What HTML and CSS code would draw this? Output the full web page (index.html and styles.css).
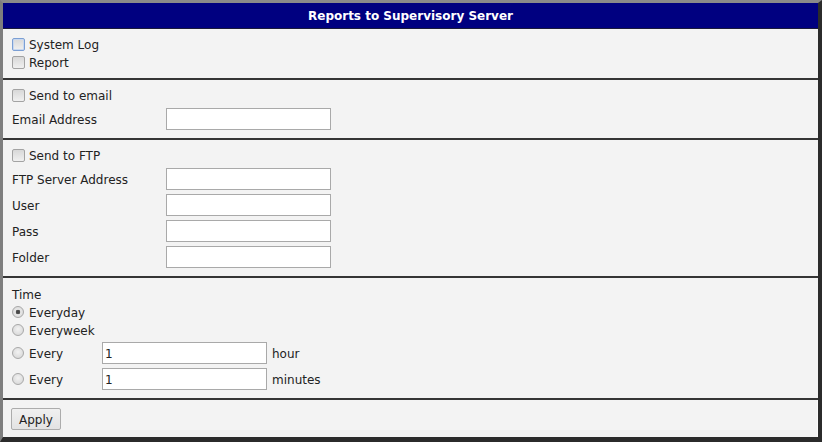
FILE: index.html
```html
<!DOCTYPE html>
<html>
<head>
<meta charset="utf-8">
<link rel="stylesheet" href="styles.css">
</head>
<body>
<div class="frame">
  <div class="title">Reports to Supervisory Server</div>
  <div class="sec sec1">
    <label class="row"><input type="checkbox" class="cb focus"><span class="t">System Log</span></label>
    <label class="row"><input type="checkbox" class="cb"><span class="t">Report</span></label>
  </div>
  <div class="sec">
    <label class="row first"><input type="checkbox" class="cb"><span class="t">Send to email</span></label>
    <div class="frow"><span class="lbl t">Email Address</span><input type="text" class="txt"></div>
  </div>
  <div class="sec">
    <label class="row first"><input type="checkbox" class="cb"><span class="t">Send to FTP</span></label>
    <div class="frow"><span class="lbl t">FTP Server Address</span><input type="text" class="txt"></div>
    <div class="frow"><span class="lbl t">User</span><input type="text" class="txt"></div>
    <div class="frow"><span class="lbl t">Pass</span><input type="text" class="txt"></div>
    <div class="frow"><span class="lbl t">Folder</span><input type="text" class="txt"></div>
  </div>
  <div class="sec">
    <div class="row time"><span class="t">Time</span></div>
    <label class="row"><input type="radio" name="t" class="rb" checked><span class="t">Everyday</span></label>
    <label class="row second"><input type="radio" name="t" class="rb"><span class="t">Everyweek</span></label>
    <div class="frow"><label class="rlbl"><input type="radio" name="t" class="rb"><span class="t">Every</span></label><input type="text" class="txt" value="1"><span class="unit t">hour</span></div>
    <div class="frow"><label class="rlbl"><input type="radio" name="t" class="rb"><span class="t">Every</span></label><input type="text" class="txt" value="1"><span class="unit t">minutes</span></div>
  </div>
  <div class="sec last">
    <button class="btn">Apply</button>
  </div>
</div>
</body>
</html>
```

FILE: styles.css
```css
html, body {
  margin: 0;
  padding: 0;
  background: #f3f3f3;
}
.frame {
  box-sizing: border-box;
  width: 822px;
  height: 442px;
  border-style: solid;
  border-width: 3px 4px 5px 3px;
  border-color: #8a8a8a #2b2b2b #2b2b2b #7e7e7e;
  background: #f3f3f3;
  display: flex;
  flex-direction: column;
  font-family: "DejaVu Sans", Verdana, sans-serif;
  font-size: 12px;
  color: #222;
}
.title {
  height: 25px;
  border-bottom: 1px solid #1a1a3a;
  background: #000080;
  color: #fff;
  font-weight: bold;
  display: flex;
  align-items: center;
  justify-content: center;
  padding-top: 1px;
  box-sizing: border-box;
  height: 26px;
}
.sec {
  padding: 6px 0 6px 9px;
  border-bottom: 2px solid #353535;
  display: flex;
  flex-direction: column;
}
.sec1 {
  padding-bottom: 7px;
}
.sec.last {
  border-bottom: none;
  padding-top: 8px;
  flex: 1;
  border-right: 1px solid #fbfbfb;
}
.t {
  padding-top: 2px;
}
.row {
  height: 18px;
  display: flex;
  align-items: center;
}
.row.first {
  margin-bottom: 2px;
}
.row.second {
  margin-bottom: 1px;
}
.row.time {
  height: 19px;
}
.frow {
  height: 26px;
  display: flex;
  align-items: center;
}
.lbl {
  width: 154px;
}
.cb {
  appearance: none;
  -webkit-appearance: none;
  width: 13px;
  height: 13px;
  margin: 0 4px 0 0;
  box-sizing: border-box;
  border: 1px solid #a3a3a3;
  border-radius: 2px;
  background: linear-gradient(#d8d8d8, #f0f0f0);
}
.cb.focus {
  border-color: #7b9fd4;
  box-shadow: inset 0 0 0 1px #c9d8ef;
}
.rb {
  appearance: none;
  -webkit-appearance: none;
  width: 12px;
  height: 12px;
  margin: 0 5px 0 0;
  box-sizing: border-box;
  border: 1px solid #a8a8a8;
  border-radius: 50%;
  background: radial-gradient(circle at 50% 40%, #f2f2f2, #d3d3d3);
}
.rb:checked {
  background: radial-gradient(circle, #404040 0, #555 2px, #e8e8e8 2.6px, #d4d4d4 100%);
}
.rlbl {
  width: 90px;
  display: flex;
  align-items: center;
}
.txt {
  box-sizing: border-box;
  width: 165px;
  height: 22px;
  margin: 0;
  border: 1px solid #a9a9a9;
  background: #fff;
  padding: 2px 2px 0;
  font-family: "DejaVu Sans", Verdana, sans-serif;
  font-size: 12px;
  color: #222;
  outline: none;
}
.unit {
  margin-left: 5px;
}
.btn {
  align-self: flex-start;
  box-sizing: border-box;
  width: 50px;
  height: 22px;
  margin-left: -1px;
  border: 1px solid #acacac;
  border-radius: 2px;
  background: linear-gradient(#f0f0f0, #e3e3e3);
  font-family: "DejaVu Sans", Verdana, sans-serif;
  font-size: 12px;
  color: #222;
  padding: 2px 0 0;
}
```
